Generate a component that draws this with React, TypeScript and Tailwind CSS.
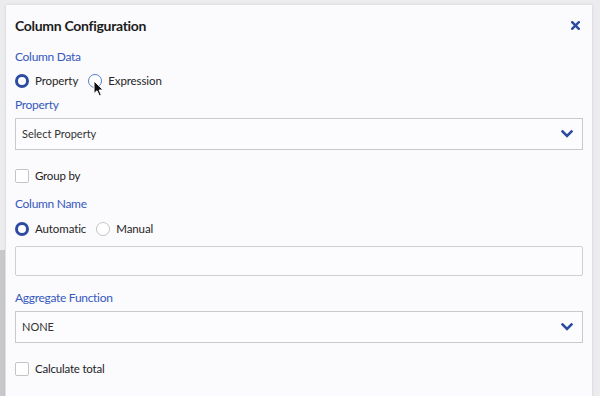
import React from "react";

const font = { fontFamily: "Lato, 'Noto Sans', sans-serif" };

function Radio({ checked, hover, label }: { checked?: boolean; hover?: boolean; label: string }) {
  return (
    <div className="flex items-center gap-[6px]">
      <span
        className={
          checked
            ? "w-[14px] h-[14px] rounded-full border-[3px] border-[#2c4ca3] bg-white"
            : hover
            ? "w-[14px] h-[14px] rounded-full border border-[#5b7ccc] bg-white"
            : "w-[14px] h-[14px] rounded-full border border-[#c4c4c8] bg-white"
        }
      />
      <span className="text-[11.5px] tracking-[-0.1px] text-[#262626]">{label}</span>
    </div>
  );
}

function Checkbox({ label }: { label: string }) {
  return (
    <div className="flex items-center gap-[6px] h-[18px]">
      <span className="w-[14px] h-[14px] rounded-[2px] border border-[#c4c4c8] bg-white" />
      <span className="text-[11.5px] tracking-[-0.2px] text-[#1e1e1e]">{label}</span>
    </div>
  );
}

function Chevron() {
  return (
    <svg width="12" height="8" viewBox="0 0 12 8" fill="none">
      <path d="M1.5 1.5 L6 6 L10.5 1.5" stroke="#2c4ca3" strokeWidth="2.6" strokeLinecap="square" />
    </svg>
  );
}

function Select({ value }: { value: string }) {
  return (
    <div className="h-[32px] border border-[#c9c9cd] bg-[#fcfbfd] flex items-center justify-between pl-[6px] pr-[9px]">
      <span className="text-[11px] text-[#333]">{value}</span>
      <Chevron />
    </div>
  );
}

function Label({ children, className }: { children: React.ReactNode; className: string }) {
  return (
    <div className={"h-[18px] leading-[18px] text-[12px] tracking-[-0.3px] text-[#3559bd] " + className}>
      {children}
    </div>
  );
}

export default function App() {
  return (
    <div className="w-[600px] h-[396px] bg-[#ececee] overflow-hidden relative" style={font}>
      <div className="absolute left-0 top-[250px] w-[5px] h-[146px] bg-[#c8c8ca]" />
      <div className="absolute left-[6px] top-[5px] w-[586px] h-[400px] bg-[#fbfafd] shadow-[0_0_3px_rgba(0,0,0,0.12)] px-[9px] pt-[10px]">
        <div className="flex items-center justify-between h-[20px]">
          <span className="text-[14px] tracking-[-0.3px] font-bold text-[#1c1c1c]">Column Configuration</span>
          <svg width="9" height="9" viewBox="0 0 9 9" className="mr-[3px]">
            <path d="M1.2 1.2 L7.8 7.8 M7.8 1.2 L1.2 7.8" stroke="#2c4ca3" strokeWidth="2.4" strokeLinecap="square" />
          </svg>
        </div>
        <Label className="mt-[13px]">Column Data</Label>
        <div className="flex items-center gap-[10px] h-[18px] mt-[6px] relative">
          <Radio checked label="Property" />
          <Radio hover label="Expression" />
          <svg className="absolute left-[78px] top-[8px]" width="12" height="17" viewBox="0 0 12 17">
            <path d="M1 1 L1 13.5 L4 10.8 L6.3 15.8 L8.3 14.9 L6.1 10 L10.2 10 Z" fill="#111" stroke="#fff" strokeWidth="1" />
          </svg>
        </div>
        <Label className="mt-[6px]">Property</Label>
        <div className="mt-[4px]">
          <Select value="Select Property" />
        </div>
        <div className="mt-[17px]">
          <Checkbox label="Group by" />
        </div>
        <Label className="mt-[10px]">Column Name</Label>
        <div className="flex items-center gap-[10px] h-[18px] mt-[7px]">
          <Radio checked label="Automatic" />
          <Radio label="Manual" />
        </div>
        <div className="mt-[8px] h-[30px] border border-[#cfcfd3] rounded-[2px] bg-[#fcfbfd]" />
        <Label className="mt-[13px]">Aggregate Function</Label>
        <div className="mt-[4px]">
          <Select value="NONE" />
        </div>
        <div className="mt-[17px]">
          <Checkbox label="Calculate total" />
        </div>
      </div>
    </div>
  );
}
